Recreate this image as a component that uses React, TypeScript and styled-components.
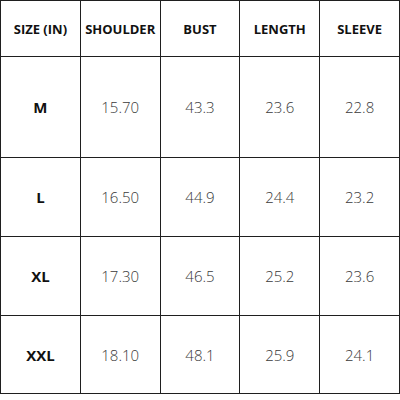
import React from "react";
import styled, { createGlobalStyle } from "styled-components";

const GlobalStyle = createGlobalStyle`
  html, body {
    margin: 0;
    padding: 0;
    background: #ffffff;
  }
`;

const Table = styled.table`
  width: 400px;
  border-collapse: collapse;
  table-layout: fixed;
  font-family: "Open Sans", "Liberation Sans", sans-serif;
`;

const Row = styled.tr<{ $h: number }>`
  height: ${(p) => p.$h}px;
`;

const HeadCell = styled.th`
  border: 1px solid #1f1f1f;
  font-size: 13px;
  font-weight: 700;
  color: #111;
  text-align: center;
  vertical-align: middle;
  padding: 0;
  white-space: nowrap;
`;

const SizeCell = styled.td`
  border: 1px solid #1f1f1f;
  font-size: 15px;
  font-weight: 700;
  color: #111;
  text-align: center;
  padding: 0;
`;

const ValueCell = styled.td`
  border: 1px solid #1f1f1f;
  font-size: 15px;
  font-weight: 300;
  color: #3a3a3a;
  text-align: center;
  padding: 0;
`;

const headers = ["SIZE (IN)", "SHOULDER", "BUST", "LENGTH", "SLEEVE"];

const rows = [
  { size: "M", h: 101, values: ["15.70", "43.3", "23.6", "22.8"] },
  { size: "L", h: 79, values: ["16.50", "44.9", "24.4", "23.2"] },
  { size: "XL", h: 79, values: ["17.30", "46.5", "25.2", "23.6"] },
  { size: "XXL", h: 78, values: ["18.10", "48.1", "25.9", "24.1"] },
];

const App: React.FunctionComponent = () => (
  <>
    <GlobalStyle />
    <Table>
      <thead>
        <Row $h={56}>
          {headers.map((h) => (
            <HeadCell key={h}>{h}</HeadCell>
          ))}
        </Row>
      </thead>
      <tbody>
        {rows.map((r) => (
          <Row key={r.size} $h={r.h}>
            <SizeCell>{r.size}</SizeCell>
            {r.values.map((v, i) => (
              <ValueCell key={i}>{v}</ValueCell>
            ))}
          </Row>
        ))}
      </tbody>
    </Table>
  </>
);

export default App;
